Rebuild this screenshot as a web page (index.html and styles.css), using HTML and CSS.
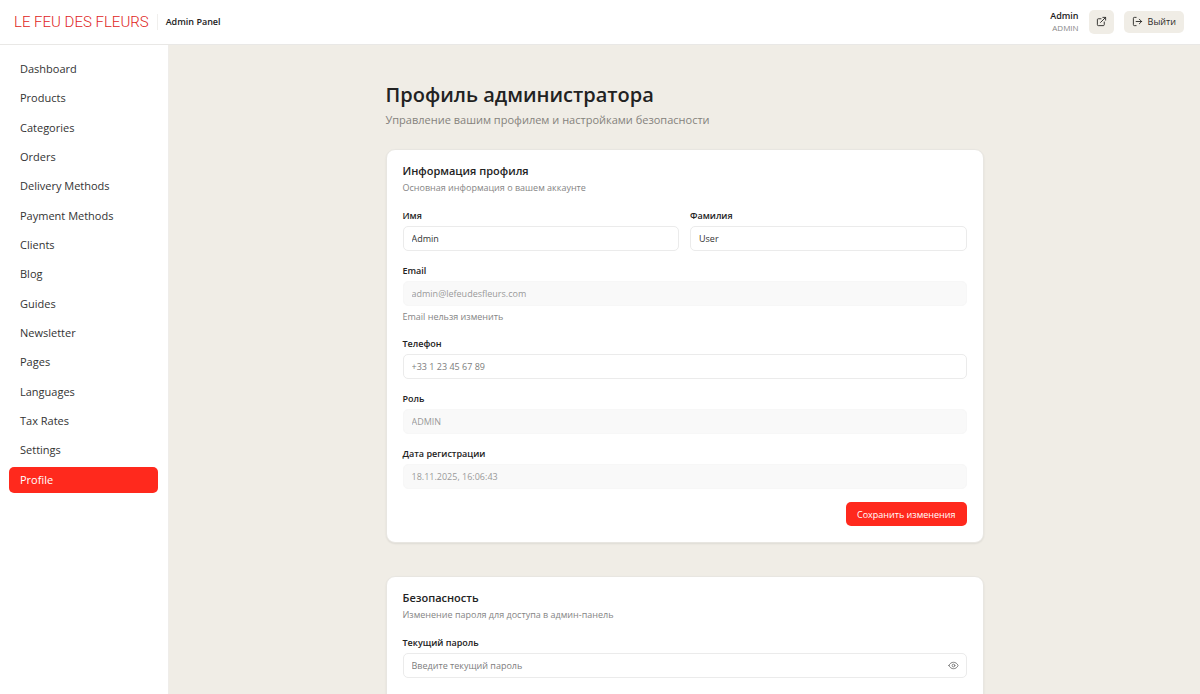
FILE: index.html
```
<!DOCTYPE html>
<html lang="ru">

<head>
    <meta charset="UTF-8">
    <meta name="viewport" content="width=device-width, initial-scale=1.0">
    <title>Admin Panel</title>
    <link rel="stylesheet" href="styles.css">
</head>

<body>
    <header class="header">
        <div class="brand">
            <a href="#" class="logo">LE FEU DES FLEURS</a>
            <span class="brand-title">Admin Panel</span>
        </div>
        <div class="header-actions">
            <div class="user">
                <span class="user-name">Admin</span>
                <span class="user-role">ADMIN</span>
            </div>
            <a href="#" class="btn btn-icon" aria-label="Открыть сайт">
                <svg class="icon" viewBox="0 0 24 24">
                    <path d="M15 3h6v6M10 14L21 3M18 13v6a2 2 0 0 1-2 2H5a2 2 0 0 1-2-2V8a2 2 0 0 1 2-2h6" />
                </svg>
            </a>
            <button type="button" class="btn btn-muted">
                <svg class="icon" viewBox="0 0 24 24">
                    <path d="M9 21H5a2 2 0 0 1-2-2V5a2 2 0 0 1 2-2h4M16 17l5-5-5-5M21 12H9" />
                </svg>
                Выйти
            </button>
        </div>
    </header>

    <div class="layout">
        <aside class="sidebar">
            <nav class="nav">
                <a href="#">Dashboard</a>
                <a href="#">Products</a>
                <a href="#">Categories</a>
                <a href="#">Orders</a>
                <a href="#">Delivery Methods</a>
                <a href="#">Payment Methods</a>
                <a href="#">Clients</a>
                <a href="#">Blog</a>
                <a href="#">Guides</a>
                <a href="#">Newsletter</a>
                <a href="#">Pages</a>
                <a href="#">Languages</a>
                <a href="#">Tax Rates</a>
                <a href="#">Settings</a>
                <a href="#" class="active">Profile</a>
            </nav>
        </aside>

        <main class="content">
            <div class="container">
                <div class="page-head">
                    <h1>Профиль администратора</h1>
                    <p>Управление вашим профилем и настройками безопасности</p>
                </div>

                <section class="card">
                    <h2>Информация профиля</h2>
                    <p class="card-text">Основная информация о вашем аккаунте</p>
                    <form class="form">
                        <div class="row">
                            <div class="field">
                                <label for="firstName">Имя</label>
                                <input type="text" id="firstName" value="Admin">
                            </div>
                            <div class="field">
                                <label for="lastName">Фамилия</label>
                                <input type="text" id="lastName" value="User">
                            </div>
                        </div>
                        <div class="field">
                            <label for="email">Email</label>
                            <input type="email" id="email" value="admin@lefeudesfleurs.com" disabled>
                            <p class="hint">Email нельзя изменить</p>
                        </div>
                        <div class="field">
                            <label for="phone">Телефон</label>
                            <input type="tel" id="phone" placeholder="+33 1 23 45 67 89">
                        </div>
                        <div class="field">
                            <label for="role">Роль</label>
                            <input type="text" id="role" value="ADMIN" disabled>
                        </div>
                        <div class="field">
                            <label for="created">Дата регистрации</label>
                            <input type="text" id="created" value="18.11.2025, 16:06:43" disabled>
                        </div>
                        <div class="form-actions">
                            <button type="submit" class="btn btn-primary">Сохранить изменения</button>
                        </div>
                    </form>
                </section>

                <section class="card card-security">
                    <h2>Безопасность</h2>
                    <p class="card-text">Изменение пароля для доступа в админ-панель</p>
                    <form class="form">
                        <div class="field">
                            <label for="password">Текущий пароль</label>
                            <div class="password">
                                <input type="password" id="password" placeholder="Введите текущий пароль">
                                <button type="button" class="eye" aria-label="Показать пароль">
                                    <svg class="icon" viewBox="0 0 24 24">
                                        <path d="M2 12c2-4.700 6-7 10-7s8 2.300 10 7c-2 4.700-6 7-10 7s-8-2.300-10-7z" />
                                        <circle cx="12" cy="12" r="3" />
                                    </svg>
                                </button>
                            </div>
                        </div>
                    </form>
                </section>
            </div>
        </main>
    </div>
</body>

</html>
```
FILE: styles.css
```
* {
    box-sizing: border-box;
}

body {
    display: flex;
    flex-direction: column;
    height: 100vh;
    margin: 0;
    overflow: hidden;
    font-family: "Open Sans", "Noto Sans", sans-serif;
    font-size: 9px;
    color: #222;
    background-color: #f0ede6;
}

h1,
h2,
p {
    margin: 0;
}

a {
    color: inherit;
    text-decoration: none;
}

input,
button {
    font-family: inherit;
    font-size: inherit;
}

.icon {
    width: 11px;
    height: 11px;
    fill: none;
    stroke: currentColor;
    stroke-width: 2;
    stroke-linecap: round;
    stroke-linejoin: round;
}

/* header */
.header {
    display: flex;
    align-items: center;
    justify-content: space-between;
    height: 45px;
    padding: 0 16px 1px 14px;
    background-color: #fff;
    border-bottom: 1px solid #e9e8e6;
}

.brand,
.header-actions {
    display: flex;
    align-items: center;
}

.brand {
    gap: 8px;
}

.header-actions {
    gap: 10px;
}

.logo {
    font-family: Roboto, "Liberation Sans", sans-serif;
    font-size: 15px;
    font-weight: 300;
    line-height: 20px;
    color: #e0251b;
}

.brand-title {
    padding-left: 8px;
    border-left: 1px solid #f0efed;
    font-weight: 600;
    line-height: 16px;
}

.user {
    display: flex;
    flex-direction: column;
    text-align: right;
    line-height: 12px;
}

.user-name {
    font-weight: 600;
}

.user-role {
    font-size: 8px;
    color: #888;
}

/* buttons */
.btn {
    display: inline-flex;
    align-items: center;
    justify-content: center;
    gap: 5px;
    height: 24px;
    padding: 0 11px;
    border: none;
    border-radius: 5px;
    cursor: pointer;
}

.btn-icon,
.btn-muted {
    color: #2b2a27;
    background-color: #f0ede6;
}

.btn-icon {
    width: 25px;
    padding: 0;
}

.btn-muted {
    height: 22px;
    padding: 0 8px;
}

.btn-primary {
    color: #fff;
    background-color: #ff291d;
}

/* sidebar */
.layout {
    display: flex;
    flex: 1;
    min-height: 0;
}

.sidebar {
    flex: none;
    width: 169px;
    padding: 11px 10px 11px 9px;
    background-color: #fff;
    border-right: 1px solid #efedea;
}

.nav {
    display: flex;
    flex-direction: column;
    justify-content: space-between;
    height: 437px;
}

.nav a {
    padding: 0 11px;
    border-radius: 5px;
    font-size: 11px;
    line-height: 26px;
    color: #333;
}

.nav a.active {
    color: #fff;
    background-color: #ff291d;
}

/* content */
.content {
    flex: 1;
    padding: 36px 24px;
    overflow: hidden;
}

.container {
    display: flex;
    flex-direction: column;
    gap: 33px;
    max-width: 598px;
    margin: 0 auto;
}

.page-head {
    margin-bottom: -12px;
}

.page-head h1 {
    font-size: 20px;
    font-weight: 600;
    line-height: 28px;
}

.page-head p {
    margin-top: 3px;
    font-size: 11px;
    line-height: 16px;
    color: #85827c;
}

.card {
    padding: 14px 16px 16px;
    background-color: #fff;
    border: 1px solid #e8e6e1;
    border-radius: 9px;
    box-shadow: 0 1px 2px rgba(0, 0, 0, 0.08);
}

.card-security {
    min-height: 280px;
}

.card h2 {
    font-size: 11px;
    font-weight: 600;
    line-height: 14px;
}

.card-text {
    margin-top: 3px;
    line-height: 14px;
    color: #858585;
}

.form {
    display: flex;
    flex-direction: column;
    gap: 13px;
    margin-top: 14px;
}

.row {
    display: grid;
    grid-template-columns: 1fr 1fr;
    gap: 11px;
}

.field {
    display: flex;
    flex-direction: column;
    gap: 4px;
}

.field label {
    font-weight: 600;
    line-height: 13px;
}

.field input {
    width: 100%;
    height: 25px;
    padding: 0 8px;
    border: 1px solid #ebebeb;
    border-radius: 5px;
    color: #333;
    background-color: #fff;
}

.field input::placeholder {
    color: #7d7d7d;
}

.field input:disabled {
    color: #999;
    background-color: #f9f9f9;
    border-color: #f7f7f7;
}

.hint {
    line-height: 14px;
    color: #858585;
}

.form-actions {
    display: flex;
    justify-content: flex-end;
}

.password {
    position: relative;
}

/* toggle sits over the right end of the input */
.eye {
    position: absolute;
    top: 0;
    right: 0;
    display: flex;
    align-items: center;
    height: 25px;
    padding: 0 8px;
    border: none;
    color: #777;
    background: none;
    cursor: pointer;
}
```
